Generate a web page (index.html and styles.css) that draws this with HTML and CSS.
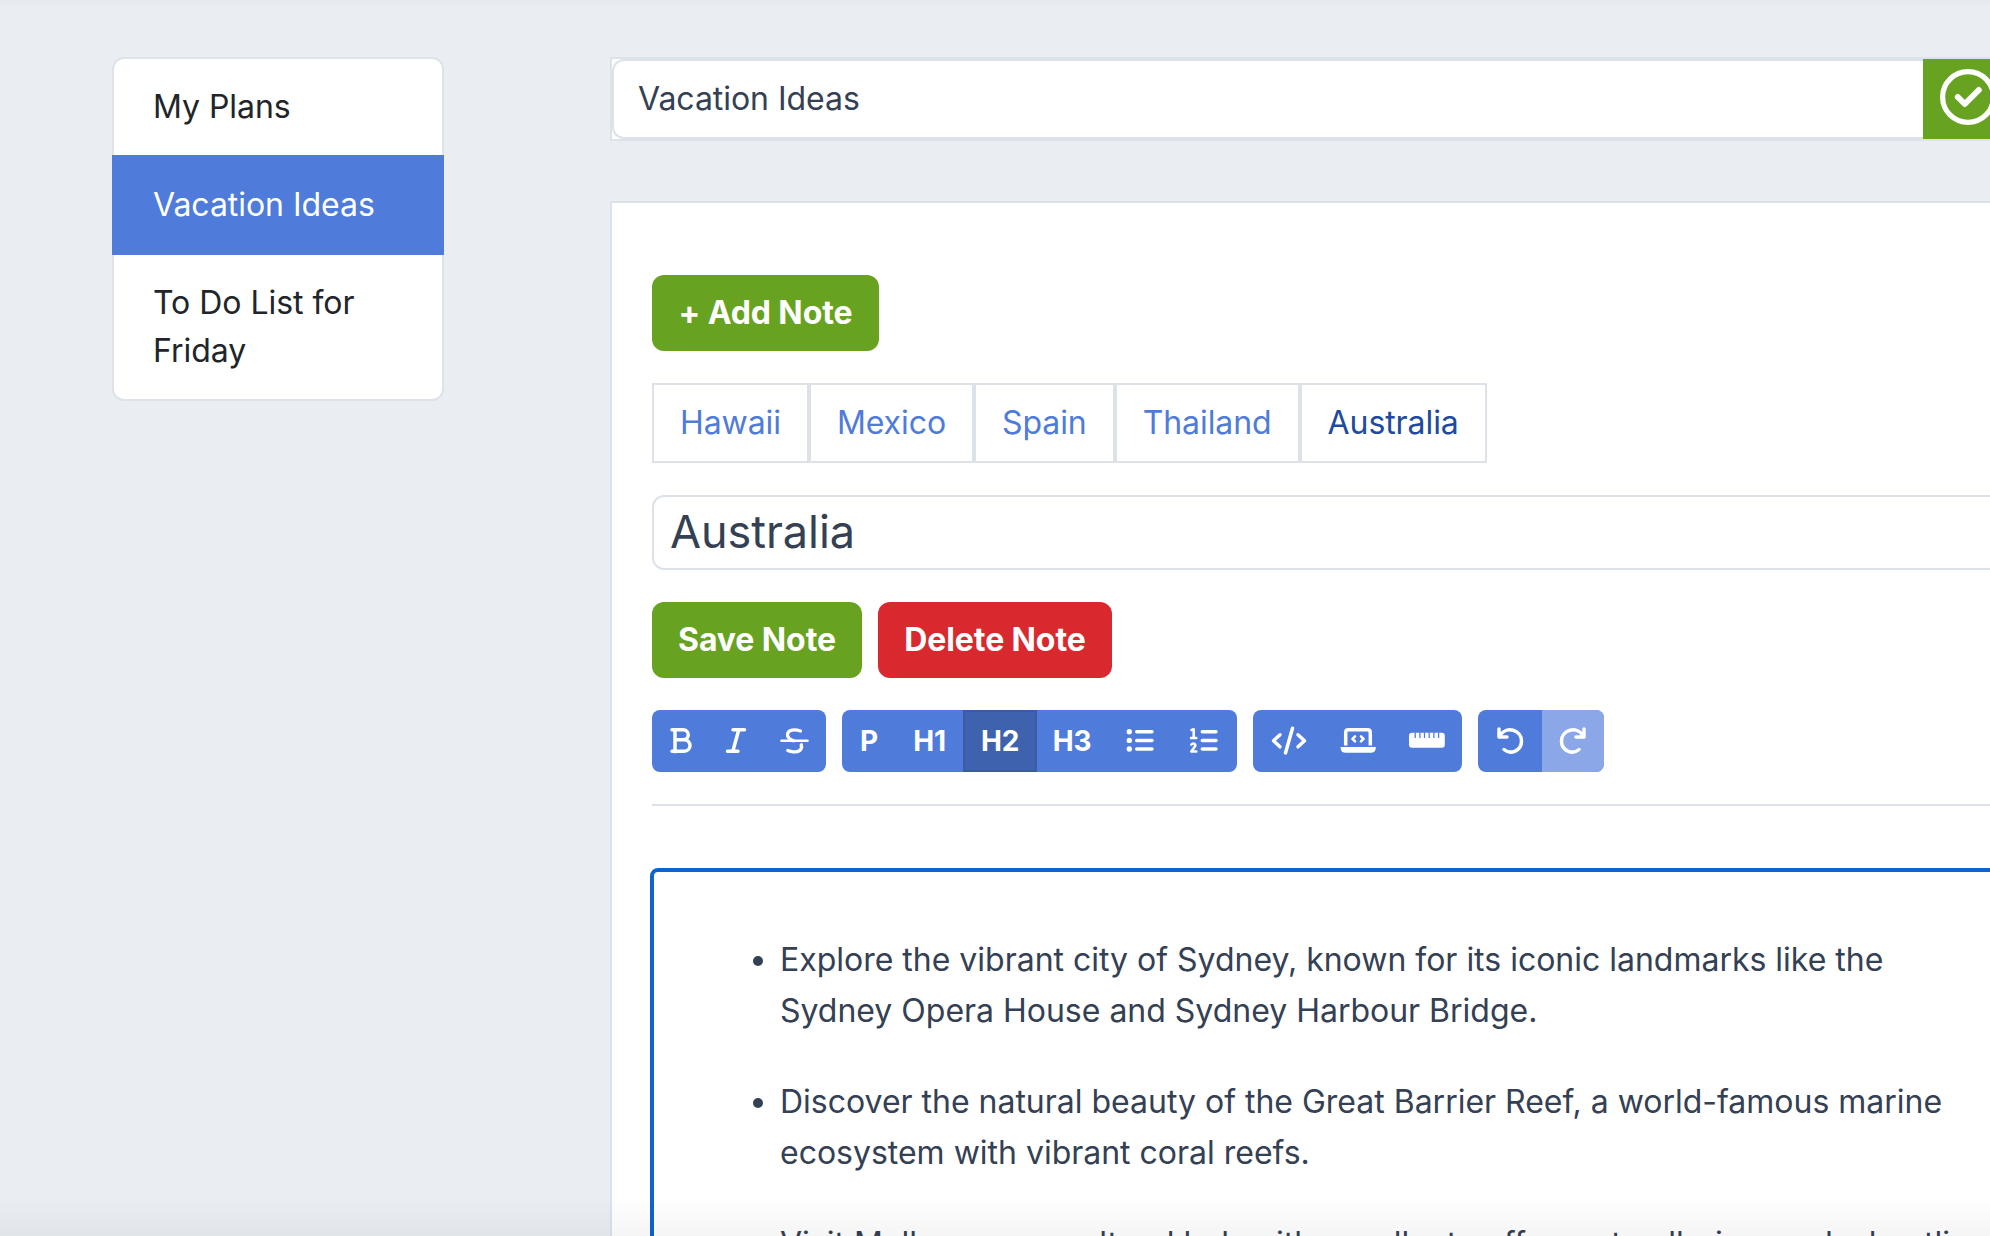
FILE: index.html
```html
<!DOCTYPE html>
<html lang="en">
<head>
<meta charset="utf-8">
<title>Vacation Ideas</title>
<link rel="stylesheet" href="styles.css">
</head>
<body>
<div class="page">
  <nav class="plans">
    <a class="plan">My Plans</a>
    <a class="plan plan-active">Vacation Ideas</a>
    <a class="plan">To Do List for Friday</a>
  </nav>
  <main class="content">
    <div class="title-bar">
      <div class="title-input">Vacation Ideas</div>
      <button class="confirm"><svg class="check" viewBox="0 0 56 56" fill="none" stroke="#fff" stroke-linecap="round" stroke-linejoin="round"><circle cx="28" cy="28" r="25.4" stroke-width="5.2"/><path d="M17.800 28l7 7L38.800 21" stroke-width="6"/></svg></button>
    </div>
    <section class="card">
      <button class="btn btn-green btn-add">+ Add Note</button>
      <div class="tabs">
        <a class="tab">Hawaii</a><a class="tab">Mexico</a><a class="tab">Spain</a><a class="tab">Thailand</a><a class="tab tab-active">Australia</a>
      </div>
      <div class="note-title">Australia</div>
      <div class="actions">
        <button class="btn btn-green btn-save">Save Note</button>
        <button class="btn btn-red">Delete Note</button>
      </div>
      <div class="toolbar">
        <div class="group">
          <svg class="tool tool-bold" viewBox="0 0 58 62"><path d="M20 19.800h11c7 0 7 10 0 10h-8v-10v22M20 41.200h12c8 0 8-11.400 0-11.400"/></svg>
          <svg class="tool tool-italic" viewBox="58 0 53 62"><path d="M81 19.800h11.500M75.500 41.200h10.500M86.800 19.800l-6 21.400"/></svg>
          <svg class="tool tool-strike" viewBox="111 0 63 62"><path class="thin" d="M129.500 30.800h26"/><path class="medium" d="M148.500 21c-5-1.800-13-2-13 4c0 3 3 4.500 6 5.800M149.300 34.800c1.500 6-4 7.500-8 7c-2 0-4-.6-5.500-1.300"/></svg>
        </div>
        <div class="group">
          <span class="tool word w-p">P</span><span class="tool word w-h1">H1</span><span class="tool word w-h2">H2</span><span class="tool word w-h3">H3</span>
          <svg class="tool tool-list" viewBox="0 0 66 62"><path d="M29.700 21.800h15.300M29.700 30.400h15.300M29.700 39h15.300"/><g class="solid"><circle cx="22.300" cy="21.800" r="2.700"/><circle cx="22.300" cy="30.400" r="2.700"/><circle cx="22.300" cy="39" r="2.700"/></g></svg>
          <svg class="tool tool-numbers" viewBox="0 0 64 62"><path d="M29.300 21.800h13.700M29.300 30.400h13.700M29.300 39h13.700"/><path class="fine" d="M18.500 20l2.200-.7v8.500M18 27.900h5.300M18.300 34.500c2-2.300 5-.3 3.600 2.100l-3.600 4.900h5"/></svg>
        </div>
        <div class="group">
          <svg class="tool tool-code" viewBox="0 0 70 62"><path d="M27 24.800l-6.500 6l6.500 6M45 24.800l6.500 6l-6.500 6M39.500 18.300l-7 24.600"/></svg>
          <svg class="tool tool-laptop" viewBox="70 0 69 62"><path class="flat" d="M92.700 35.500v-13q0-2.700 2.700-2.700h19.200q2.700 0 2.700 2.700v13"/><path class="thin" d="M102 26.300l-2.500 2.500l2.500 2.500M108 26.300l2.500 2.500l-2.500 2.500"/><path class="solid" d="M87.600 37h35.200c0 4-1.500 5.700-4.500 5.700h-26.200c-3 0-4.500-1.700-4.500-5.700z"/></svg>
          <svg class="tool tool-ruler" viewBox="139 0 70 62"><rect class="solid" x="156" y="22.800" width="35.800" height="14.900" rx="3"/><path class="notches" d="M162.200 22.500v5.500M166.900 22.500v5.500M171.500 22.500v5.500M176.200 22.500v5.500M180.900 22.500v5.500M185.600 22.500v5.500"/></svg>
        </div>
        <div class="group">
          <svg class="tool tool-undo" viewBox="0 0 64 62"><path d="M21 19v8h8M21.500 26c7-11 22-6 22 5c0 10-11 14-17.500 8.500"/></svg>
          <svg class="tool tool-redo" viewBox="64 0 62 62"><path d="M106 19v8h-8M105.500 26c-7-11-22-6-22 5c0 10 11 14 17.500 8.500"/></svg>
        </div>
      </div>
      <hr class="rule">
      <div class="editor">
        <ul class="notes">
          <li>Explore the vibrant city of Sydney, known for its iconic landmarks like the Sydney Opera House and Sydney Harbour Bridge.</li>
          <li>Discover the natural beauty of the Great Barrier Reef, a world-famous marine ecosystem with vibrant coral reefs.</li>
          <li>Visit Melbourne, a cultural hub with excellent coffee, art galleries, and a bustling food scene.</li>
        </ul>
      </div>
    </section>
  </main>
</div>
<div class="top-shade"></div>
<div class="bottom-shade"></div>
</body>
</html>
```
FILE: styles.css
```css
* { box-sizing: border-box; }
body {
  margin: 0;
  width: 1990px;
  height: 1236px;
  overflow: hidden;
  background: #eaeef3;
  color: #344054;
  font: 32px/48px Inter, "Liberation Sans", sans-serif;
  letter-spacing: -0.04px;
}
.page { display: flex; align-items: flex-start; gap: 166px; padding: 57px 0 0 112px; height: 1236px; overflow: hidden; }
.plans { width: 332px; flex: none; display: flex; flex-direction: column; border: 2px solid #dee2e9; border-radius: 12px; background: #fff; color: #212529; }
.plan { padding: 24px 40px 24px 39px; line-height: 48px; height: 96px; }
.plan-active { margin: 0 -2px; padding: 26px 42px 26px 41px; height: 100px; background: #4f7bda; color: #fff; }
.plan:last-child { height: 144px; }
.content { width: 1500px; flex: none; }
.title-bar { display: flex; height: 84px; border: 2px solid #dde2e9; background: #fff; }
.title-input { width: 1311px; height: 80px; border: 2px solid #dde2e9; border-right: 0; border-radius: 12px 0 0 12px; padding: 14px 24px; }
.confirm { display: flex; align-items: flex-start; width: 180px; height: 80px; border: 0; padding: 10px 17px; background: #67a221; }
.check { display: block; width: 56px; height: 56px; }
.card { margin-top: 60px; height: 1300px; border: 2px solid #dde2e9; background: #fff; padding: 72px 40px; }
.btn { display: block; height: 76px; border: 0; border-radius: 12px; color: #fff; font: 700 32px/48px Inter, "Liberation Sans", sans-serif; letter-spacing: -0.1px; text-align: center; padding: 0; width: 234px; }
.btn-green { background: #67a221; }
.btn-add { width: 227px; }
.btn-save { width: 210px; }
.btn-red { background: #d9292f; }
.tabs { display: flex; margin-top: 32px; letter-spacing: -0.08px; }
.tab { height: 80px; padding: 14px 26px; border: 2px solid #dde2e9; color: #4f7bda; }
.tab-active { color: #204a9f; }
.note-title { height: 75px; margin-top: 32px; padding: 9px 16px; border: 2px solid #dde2e9; border-radius: 12px; font-size: 45px; line-height: 52px; }
.actions { display: flex; gap: 16px; margin-top: 32px; }
.toolbar { display: flex; gap: 16px; margin-top: 32px; }
.group { display: flex; height: 62px; border-radius: 8px; overflow: hidden; background: #4f7bda; }
.tool { display: block; flex: none; height: 62px; fill: none; stroke: #fff; stroke-width: 3.500; stroke-linecap: round; stroke-linejoin: round; }
.tool-bold { width: 58px; }
.tool-italic { width: 53px; }
.tool-strike { width: 63px; }
.tool-list { width: 66px; }
.tool-numbers { width: 64px; }
.tool-code { width: 70px; }
.tool-laptop { width: 69px; }
.tool-ruler { width: 70px; }
.tool-undo { width: 64px; }
.tool-redo { width: 62px; background: #8ba7e7; }
.medium { stroke-width: 3.300; }
.thin { stroke-width: 2.600; }
.fine { stroke-width: 2.500; }
.flat { stroke-linecap: butt; }
.solid { fill: #fff; stroke: none; }
.notches { stroke: #4f7bda; stroke-width: 1.300; stroke-linecap: butt; }
.word { color: #fff; font-size: 28px; font-weight: 700; letter-spacing: -0.3px; line-height: 62px; text-align: center; }
.w-p { width: 54px; }
.w-h1 { width: 67px; }
.w-h2 { width: 74px; background: #3f62ae; border: 2px solid #3b5ca4; line-height: 58px; }
.w-h3 { width: 70px; }
.rule { margin: 32px 0 0; border: 0; height: 2px; background: #dde2e9; }
.editor { margin: 62px -2px 0; height: 700px; border: 4px solid #0f62d0; border-radius: 8px; padding: 62px 0 0 46px; }
.notes { margin: 0; padding: 0 0 0 80px; width: 1295px; letter-spacing: -0.01px; }
.notes li { line-height: 51px; margin-bottom: 40px; }
.top-shade, .bottom-shade { position: absolute; left: 0; width: 1990px; pointer-events: none; }
.top-shade { top: 0; height: 6px; background: linear-gradient(rgba(0,0,0,.02), transparent); }
.bottom-shade { top: 1196px; height: 40px; background: linear-gradient(transparent, rgba(0,0,0,.04)); }
```
